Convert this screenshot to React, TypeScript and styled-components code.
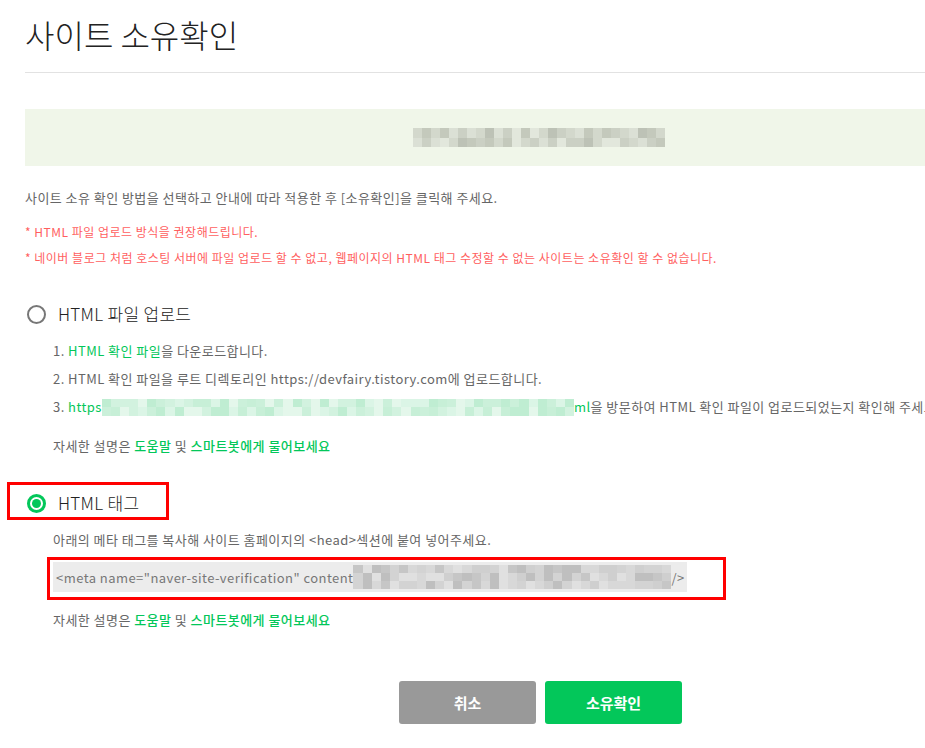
import React from "react";
import styled, { createGlobalStyle } from "styled-components";

const Global = createGlobalStyle`
  html, body { margin: 0; padding: 0; background: #fff; overflow: hidden; }
  body { font-family: "Noto Sans CJK KR", "Noto Sans", sans-serif; color: #666; }
`;

const Page = styled.div`
  width: 1031px;
  padding-left: 25px;
  box-sizing: content-box;
`;

const Title = styled.h1`
  margin: 16px 0 0;
  font-size: 32px;
  line-height: 36px;
  font-weight: 300;
  color: #222;
  letter-spacing: 0px;
`;

const Rule = styled.hr`
  margin: 20px 0 0;
  border: 0;
  height: 1px;
  background: #e2e2e2;
`;

const Band = styled.div`
  margin-top: 36px;
  height: 57px;
  background: #f0f6e9;
  display: flex;
  align-items: center;
  padding-left: 388px;
`;

const MosaicWrap = styled.span<{ $w: number; $h: number }>`
  display: inline-grid;
  flex: none;
  width: ${(p) => p.$w}px;
  height: ${(p) => p.$h}px;
  grid-auto-flow: column;
  vertical-align: middle;
`;

const Cell = styled.span`
  display: block;
`;

function rand(seed: number) {
  let s = seed;
  return () => {
    s = (s * 9301 + 49297) % 233280;
    return s / 233280;
  };
}

function Mosaic({
  w,
  h,
  rows,
  cell,
  palette,
  seed,
}: {
  w: number;
  h: number;
  rows: number;
  cell: number;
  palette: string[];
  seed: number;
}) {
  const cols = Math.round(w / cell);
  const r = rand(seed);
  const cells = [] as React.ReactNode[];
  for (let c = 0; c < cols; c++) {
    for (let k = 0; k < rows; k++) {
      const color = palette[Math.floor(r() * palette.length)];
      cells.push(<Cell key={c + "-" + k} style={{ background: color }} />);
    }
  }
  return (
    <MosaicWrap
      $w={w}
      $h={h}
      style={{
        gridTemplateRows: `repeat(${rows}, 1fr)`,
        gridTemplateColumns: `repeat(${cols}, 1fr)`,
      }}
    >
      {cells}
    </MosaicWrap>
  );
}

const Desc = styled.p`
  margin: 22px 0 0;
  font-size: 13px;
  line-height: 20px;
  color: #666;
  letter-spacing: 0.45px;
  white-space: nowrap;
`;

const Warn = styled.p<{ $gap: number }>`
  margin: ${(p) => p.$gap}px 0 0;
  font-size: 12px;
  line-height: 20px;
  color: #ff5f5f;
  letter-spacing: 0.5px;
  white-space: nowrap;
`;

const OptionRow = styled.div<{ $gap: number }>`
  position: relative;
  margin-top: ${(p) => p.$gap}px;
  height: 24px;
  display: flex;
  align-items: center;
  gap: 12px;
  padding-left: 2px;
`;

const Radio = styled.span<{ $on?: boolean }>`
  box-sizing: border-box;
  width: 19px;
  height: 19px;
  border-radius: 50%;
  border: ${(p) => (p.$on ? "3px solid #03c75a" : "2px solid #777")};
  display: flex;
  align-items: center;
  justify-content: center;
  &::after {
    content: "";
    display: ${(p) => (p.$on ? "block" : "none")};
    width: 9px;
    height: 9px;
    border-radius: 50%;
    background: #03c75a;
  }
`;

const OptionLabel = styled.span`
  font-size: 17px;
  font-weight: 300;
  color: #222;
  line-height: 24px;
  letter-spacing: 0.3px;
`;

const Highlight = styled.span<{ $left: number; $top: number; $w: number; $h: number }>`
  position: absolute;
  left: ${(p) => p.$left}px;
  top: ${(p) => p.$top}px;
  width: ${(p) => p.$w}px;
  height: ${(p) => p.$h}px;
  box-sizing: border-box;
  border: 3px solid #f00;
  pointer-events: none;
`;

const Body = styled.div<{ $gap: number }>`
  margin-top: ${(p) => p.$gap}px;
  padding-left: 28px;
`;

const Steps = styled.ol`
  margin: 0;
  padding: 0;
  list-style: none;
`;

const Step = styled.li`
  font-size: 13px;
  line-height: 28px;
  color: #666;
  letter-spacing: 0.45px;
  white-space: nowrap;
  display: flex;
  align-items: center;
`;

const Green = styled.span`
  color: #03c75a;
`;

const GreenLink = styled.a`
  color: #03c75a;
  font-weight: 500;
  text-decoration: none;
`;

const Help = styled.p<{ $gap: number }>`
  margin: ${(p) => p.$gap}px 0 0;
  font-size: 13px;
  line-height: 20px;
  color: #666;
  letter-spacing: 0.45px;
  white-space: nowrap;
`;

const MetaWrap = styled.div`
  position: relative;
  margin-top: 12px;
  width: 634px;
  height: 30px;
  background: #ececec;
  display: flex;
  align-items: center;
  padding-left: 3px;
  box-sizing: border-box;
  font-size: 13px;
  color: #777;
  letter-spacing: 0.45px;
  white-space: nowrap;
`;

const Buttons = styled.div`
  margin-top: 51px;
  display: flex;
  justify-content: center;
  gap: 9px;
`;

const Button = styled.button<{ $primary?: boolean }>`
  width: 137px;
  height: 43px;
  border: 0;
  border-radius: 3px;
  background: ${(p) => (p.$primary ? "#03c75a" : "#999")};
  color: #fff;
  font-family: "Noto Sans CJK KR", sans-serif;
  font-size: 15px;
  font-weight: 700;
  cursor: pointer;
`;

const bandPalette = ["#c4c9bc", "#cbd0c4", "#d3d8cc", "#dbe0d5", "#bdc2b6", "#e2e7dc"];
const greenPalette = ["#c7efd7", "#d2f2df", "#dbf5e6", "#bfedd2", "#e4f7eb", "#cbf0da"];
const grayPalette = ["#c6c6c6", "#cfcfcf", "#d8d8d8", "#bfbfbf", "#e0e0e0", "#d3d3d3"];

export default function App() {
  return (
    <>
      <Global />
      <Page>
        <Title>사이트 소유확인</Title>
        <Rule />
        <Band>
          <Mosaic w={252} h={19} rows={2} cell={9} palette={bandPalette} seed={7} />
        </Band>
        <Desc>사이트 소유 확인 방법을 선택하고 안내에 따라 적용한 후 [소유확인]을 클릭해 주세요.</Desc>
        <Warn $gap={14}>* HTML 파일 업로드 방식을 권장해드립니다.</Warn>
        <Warn $gap={6}>
          * 네이버 블로그 처럼 호스팅 서버에 파일 업로드 할 수 없고, 웹페이지의 HTML 태그 수정할 수 없는 사이트는 소유확인 할 수 없습니다.
        </Warn>

        <OptionRow $gap={34}>
          <Radio />
          <OptionLabel>HTML 파일 업로드</OptionLabel>
        </OptionRow>
        <Body $gap={11}>
          <Steps>
            <Step>
              1.&nbsp;<Green>HTML 확인 파일</Green>을 다운로드합니다.
            </Step>
            <Step>2. HTML 확인 파일을 루트 디렉토리인 https://devfairy.tistory.com에 업로드합니다.</Step>
            <Step>
              3.&nbsp;<Green>https</Green>
              <Mosaic w={472} h={17} rows={2} cell={9} palette={greenPalette} seed={11} />
              <Green>ml</Green>을 방문하여 HTML 확인 파일이 업로드되었는지 확인해 주세요.
            </Step>
          </Steps>
          <Help $gap={15}>
            자세한 설명은 <GreenLink>도움말</GreenLink> 및 <GreenLink>스마트봇에게 물어보세요</GreenLink>
          </Help>
        </Body>

        <OptionRow $gap={35}>
          <Radio $on />
          <OptionLabel>HTML 태그</OptionLabel>
          <Highlight $left={-18} $top={-9} $w={162} $h={38} />
        </OptionRow>
        <Body $gap={15}>
          <Help $gap={0}>아래의 메타 태그를 복사해 사이트 홈페이지의 &lt;head&gt;섹션에 붙여 넣어주세요.</Help>
          <MetaWrap>
            {'<meta name="naver-site-verification" content'}
            <Mosaic w={318} h={24} rows={3} cell={9} palette={grayPalette} seed={23} />
            {"/>"}
            <Highlight $left={-6} $top={-5} $w={679} $h={43} />
          </MetaWrap>
          <Help $gap={18}>
            자세한 설명은 <GreenLink>도움말</GreenLink> 및 <GreenLink>스마트봇에게 물어보세요</GreenLink>
          </Help>
        </Body>

        <Buttons>
          <Button>취소</Button>
          <Button $primary>소유확인</Button>
        </Buttons>
      </Page>
    </>
  );
}
